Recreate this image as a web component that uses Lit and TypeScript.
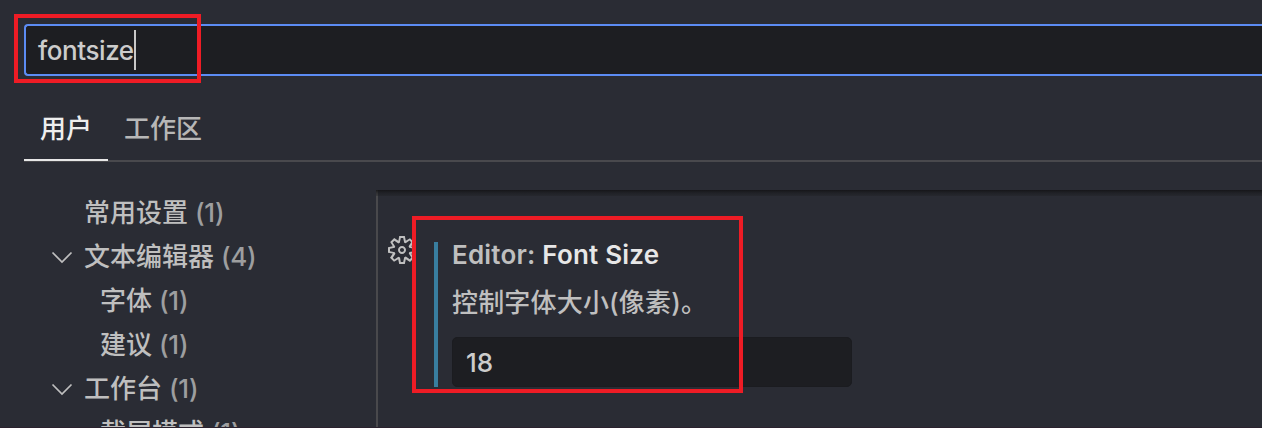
import { LitElement, html, css, nothing } from "lit";
import { customElement, property } from "lit/decorators.js";

interface TocItem {
  label: string;
  count: number;
  level: number;
  expandable?: boolean;
}

const TOC: TocItem[] = [
  { label: "常用设置", count: 1, level: 0 },
  { label: "文本编辑器", count: 4, level: 0, expandable: true },
  { label: "字体", count: 1, level: 1 },
  { label: "建议", count: 1, level: 1 },
  { label: "工作台", count: 1, level: 0, expandable: true },
  { label: "截屏模式", count: 1, level: 1 },
];

@customElement("toc-row")
class TocRow extends LitElement {
  @property({ attribute: false }) item!: TocItem;

  static styles = css`
    :host { display: block; }
    .row { display: flex; align-items: center; height: 44px; padding-left: 48px; color: #bfbfbf; white-space: pre; }
    .twistie { width: 28px; height: 28px; margin-right: 8px; flex: none; }
    .nested { padding-left: 64px; }
    svg { display: block; width: 28px; height: 28px; }
    .count { color: #9d9e9f; margin-left: 7px; letter-spacing: -0.3px; }
  `;

  render() {
    const { label, count, level, expandable } = this.item;
    return html`<div class="row ${level ? "nested" : ""}">
      <span class="twistie">${expandable
        ? html`<svg viewBox="0 0 28 28" fill="none" stroke="#bfbfbf" stroke-width="1.7"><path d="M4.5 9.5L14 19L23.5 9.5" /></svg>`
        : nothing}</span><span>${label}</span><span class="count">(${count})</span>
    </div>`;
  }
}

@customElement("app-root")
class AppRoot extends LitElement {
  static styles = css`
    :host {
      display: block; position: relative; box-sizing: border-box; width: 100%; height: 428px;
      overflow: hidden; background: #2a2c34; color: #bfbfbf;
      font: 450 26px/44px Inter, "Noto Sans CJK SC", sans-serif;
    }
    .page { display: flex; flex-direction: column; box-sizing: border-box; height: 428px; border-bottom: 1px solid #2b222e; }
    .header { padding: 24px 0 0 24px; flex: none; }
    .search {
      display: flex; align-items: center; box-sizing: border-box; height: 52px;
      border: 2px solid #5c8cf4; border-right: 0; border-radius: 4px 0 0 4px;
      background: #1d1e22; padding-left: 12px; color: #cccccc;
    }
    .query { letter-spacing: -0.42px; padding-top: 2px; }
    .caret { width: 2px; height: 40px; background: #c8c8c8; }
    .tabs { display: flex; height: 84px; border-bottom: 2px solid #49494d; white-space: nowrap; }
    .tab { box-sizing: border-box; height: 85px; padding: 31px 17px 0 16px; color: #b7b7b7; }
    .tab.active { width: 84px; padding-right: 0; color: #eeeeee; border-bottom: 2px solid #e7e7e7; }
    .body { display: flex; margin-top: 28px; flex: 1; min-height: 0; }
    .toc { width: 376px; flex: none; overflow: hidden; box-sizing: border-box; padding-top: 1px; }
    .settings { flex: 1; border-left: 2px solid #49494c; }
    .shadow { height: 6px; margin-left: -2px; background: linear-gradient(rgba(18, 18, 20, 0.85), rgba(22, 23, 25, 0.5) 50%, rgba(28, 29, 31, 0.3)); }
    .setting { display: flex; margin-top: 46px; }
    .gear { width: 32px; height: 32px; margin: -8px 16px 0 8px; fill: #c0c0c0; flex: none; }
    .modified { width: 4px; height: 145px; background: #397e9f; flex: none; }
    .content { margin-left: 14px; }
    .title { height: 26px; line-height: 26px; font-weight: 600; white-space: pre; letter-spacing: 0.2px; }
    .title b { color: #e7e7e7; font-weight: 600; }
    .desc { height: 40px; line-height: 42px; margin-top: 14px; letter-spacing: 0.18px; }
    .value {
      box-sizing: border-box; width: 400px; height: 50px; line-height: 50px; margin-top: 15px;
      padding-left: 13px; background: #1d1e22; border-radius: 5px; color: #cccccc;
      border: 1px solid #1b1c20;
    }
    .mark { position: absolute; box-sizing: border-box; border: 4px solid #ee1c25; }
    .mark-search { left: 14px; top: 14px; width: 187px; height: 69px; }
    .mark-setting { left: 412px; top: 216px; width: 331px; height: 177px; }
  `;

  render() {
    return html`
      <div class="page">
        <div class="header">
          <div class="search"><span class="query">fontsize</span><span class="caret"></span></div>
          <div class="tabs"><div class="tab active">用户</div><div class="tab">工作区</div></div>
        </div>
        <div class="body">
          <div class="toc">${TOC.map((item) => html`<toc-row .item=${item}></toc-row>`)}</div>
          <div class="settings">
            <div class="shadow"></div>
            <div class="setting">
              <svg class="gear" viewBox="0 0 16 16"><path fill-rule="evenodd" clip-rule="evenodd" d="M9.1 4.4L8.6 2H7.4l-.5 2.4-.7.3-2-1.3-.9.8 1.3 2-.2.7-2.4.5v1.2l2.4.5.3.8-1.3 2 .8.8 2-1.3.8.3.4 2.3h1.2l.5-2.4.8-.3 2 1.3.8-.8-1.3-2 .3-.8 2.3-.4V7.4l-2.4-.5-.3-.8 1.3-2-.8-.8-2 1.3-.7-.2zM9.4 1l.5 2.4L12 2.1l2 2-1.4 2.1 2.4.4v2.8l-2.4.5L14 12l-2 2-2.1-1.4-.5 2.4H6.6l-.5-2.4L4 13.9l-2-2 1.4-2.1L1 9.4V6.6l2.4-.5L2.1 4l2-2 2.1 1.4.4-2.4h2.8zm.6 7c0 1.1-.9 2-2 2s-2-.9-2-2 .9-2 2-2 2 .9 2 2zM8 9c.6 0 1-.4 1-1s-.4-1-1-1-1 .4-1 1 .4 1 1 1z" /></svg>
              <div class="modified"></div>
              <div class="content">
                <div class="title">Editor: <b>Font Size</b></div>
                <div class="desc">控制字体大小(像素)。</div>
                <div class="value">18</div>
              </div>
            </div>
          </div>
        </div>
      </div>
      <div class="mark mark-search"></div>
      <div class="mark mark-setting"></div>
    `;
  }
}
